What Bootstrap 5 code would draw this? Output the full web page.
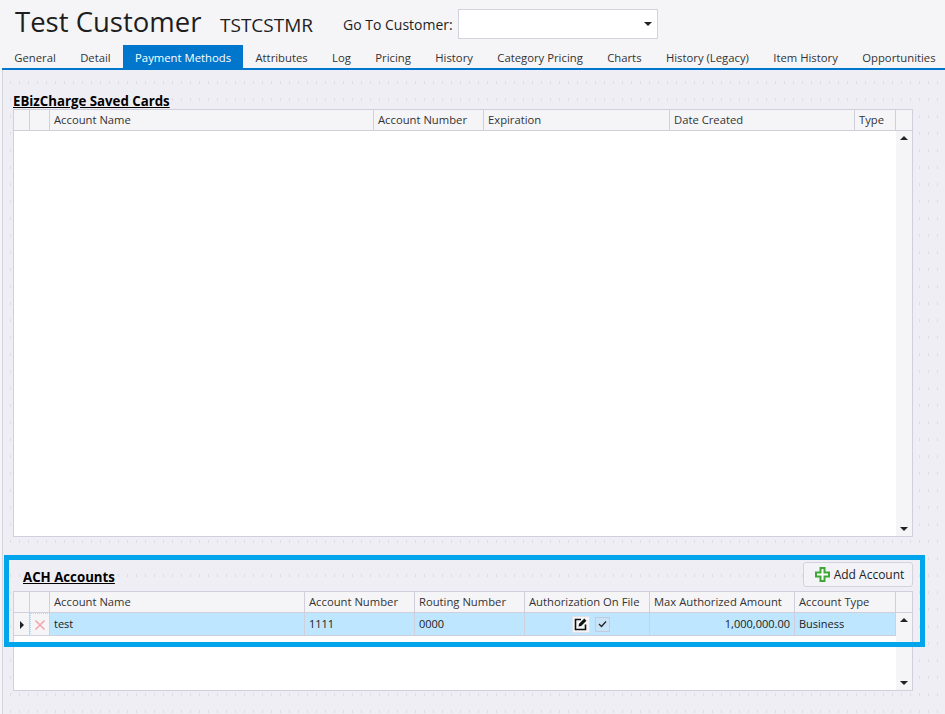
<!doctype html>
<html lang="en"><head><meta charset="utf-8"><title>Test Customer</title>
<link href="https://cdn.jsdelivr.net/npm/bootstrap@5.3.0/dist/css/bootstrap.min.css" rel="stylesheet">
<style>
html,body{height:100%;}
body{background:#f5f5f8;font-family:"Open Sans","Noto Sans","Liberation Sans",sans-serif;color:#1e1e1e;font-size:12px;overflow:hidden;height:714px;}
.app-head{height:45px;padding:9px 0 0 15px;}
.cust-name{font-size:27.5px;line-height:30px;margin:-2px 0 0;font-weight:400;width:205px;}
.cust-code{font-size:19px;line-height:30px;width:123px;margin-top:1px;}
.goto-label{font-size:14px;line-height:30px;width:115px;margin-top:1px;}
.combo{width:200px;height:30px;background:#fff;border:1px solid #d3d3de;}
.combo-arrow{width:0;height:0;border-left:4px solid transparent;border-right:4px solid transparent;border-top:4px solid #222;margin-right:5px;}
.tabbar{height:25px;margin-left:2px;border-bottom:2px solid #0077cc;}
.tabitem{height:23px;line-height:26px;padding:0 12.2px;font-size:11.3px;color:#333;white-space:nowrap;}
.tabitem.on{background:#0077cc;color:#fff;}
.work{position:relative;height:644px;margin-left:2px;border-left:1px solid #d3d3de;background-color:#eeeef4;background-image:radial-gradient(#dcdce3 .5px,transparent .8px);background-size:9px 17px;background-position:3px 4px;padding:23px 0 0 10px;}
.sect-title{font-weight:700;font-size:13.25px;line-height:16px;color:#000;text-decoration:underline;margin:0;background:#eeeef4;width:fit-content;}
.grid-box{width:900px;background:#fff;border:1px solid #d0d0dc;}
.grid-a{height:428px;}
.grid-b{height:100px;}
.grid-main{flex:1 1 auto;min-width:0;}
.dg{table-layout:fixed;border-collapse:separate;border-spacing:0;width:882px;margin:0;}
.dg th,.dg td{font-weight:400;padding:0 4px;border-right:1px solid #d0d0dc;border-bottom:1px solid #d0d0dc;white-space:nowrap;overflow:hidden;color:#333;line-height:14px;}
.dg th{font-size:11.25px;background:#f5f5f8;height:21px;}
.dg td{font-size:11px;height:23px;background:#bfe6ff;color:#1a1a1a;}
.dg td.rowhead{background:#f5f5f8;padding:0;text-align:center;}
.dg td.rowdel{background:#f5f5f8;padding:0;text-align:center;outline:1px dotted #b9dcf5;outline-offset:-1px;}
.scroll-rail{width:16px;flex:0 0 16px;background:#f5f5f8;}
.scroll-top{height:21px;border-bottom:1px solid #d0d0dc;}
.sarrow-up{width:0;height:0;border-left:4px solid transparent;border-right:4px solid transparent;border-bottom:4px solid #222;margin:5px auto 0;}
.sarrow-down{width:0;height:0;border-left:4px solid transparent;border-right:4px solid transparent;border-top:4px solid #222;margin:0 auto 5px;}
.ach-head{height:54px;width:900px;padding-left:10px;}
.ach-title{margin-bottom:6px;}
.add-btn{--bs-btn-padding-x:0;--bs-btn-padding-y:0;--bs-btn-border-radius:3px;width:110px;height:25px;background:#f3f3f7;border:1px solid #d3d3de;font-size:12px;color:#222;margin-bottom:4px;padding-left:3px;}
.focus-box{position:absolute;left:1px;top:485px;width:921px;height:92px;border:5px solid #00a5ec;pointer-events:none;}
.amt{text-align:right;}
.mini-edit{width:18px;height:17px;background:#f5f5f8;border:1px solid #e2e2ea;}
.mini-check{width:15px;height:15px;border:1px solid #c3cbdc;background:#c9e3f6;}
.auth-cell{gap:5px;padding-left:7px;}
</style></head><body>
<header class="app-head d-flex align-items-start">
<h1 class="cust-name">Test Customer</h1>
<div class="cust-code">TSTCSTMR</div>
<div class="goto-label">Go To Customer:</div>
<div class="combo d-flex align-items-center justify-content-end"><span class="combo-arrow"></span></div>
</header>
<nav class="tabbar d-flex">
<span class="tabitem">General</span><span class="tabitem">Detail</span><span class="tabitem on">Payment Methods</span><span class="tabitem">Attributes</span><span class="tabitem">Log</span><span class="tabitem">Pricing</span><span class="tabitem">History</span><span class="tabitem">Category Pricing</span><span class="tabitem">Charts</span><span class="tabitem">History (Legacy)</span><span class="tabitem">Item History</span><span class="tabitem">Opportunities</span>
</nav>
<main class="work">
<h2 class="sect-title">EBizCharge Saved Cards</h2>
<div class="grid-box grid-a d-flex">
<div class="grid-main"><table class="dg"><colgroup><col style="width:16px"><col style="width:20px"><col style="width:324px"><col style="width:110px"><col style="width:186px"><col style="width:185px"><col style="width:41px"></colgroup>
<thead><tr><th></th><th></th><th>Account Name</th><th>Account Number</th><th>Expiration</th><th>Date Created</th><th>Type</th></tr></thead></table></div>
<div class="scroll-rail d-flex flex-column"><div class="scroll-top"></div><div class="sarrow-up"></div><div class="flex-grow-1"></div><div class="sarrow-down"></div></div>
</div>
<div class="ach-head d-flex align-items-end justify-content-between">
<h2 class="sect-title ach-title">ACH Accounts</h2>
<button type="button" class="btn add-btn d-inline-flex align-items-center justify-content-center gap-1">
<svg width="15" height="15" viewBox="0 0 15 15"><path d="M5.500 1h4v4.500H14v4H9.500V14h-4V9.500H1v-4h4.500z" fill="#fff" stroke="#3fa535" stroke-width="2"/></svg>Add Account</button>
</div>
<div class="grid-box grid-b d-flex">
<div class="grid-main"><table class="dg"><colgroup><col style="width:16px"><col style="width:20px"><col style="width:255px"><col style="width:110px"><col style="width:110px"><col style="width:125px"><col style="width:145px"><col style="width:101px"></colgroup>
<thead><tr><th></th><th></th><th>Account Name</th><th>Account Number</th><th>Routing Number</th><th>Authorization On File</th><th>Max Authorized Amount</th><th>Account Type</th></tr></thead>
<tbody><tr><td class="rowhead"><svg width="6" height="10" viewBox="0 0 6 10"><path d="M1 1l4 4-4 4z" fill="#222"/></svg></td>
<td class="rowdel"><svg width="12" height="12" viewBox="0 0 12 12"><path d="M1.500 1.500l9 9M10.500 1.500l-9 9" stroke="#f4a9ad" stroke-width="1.700"/></svg></td>
<td>test</td><td>1111</td><td>0000</td>
<td><div class="d-flex justify-content-center align-items-center auth-cell"><span class="mini-edit d-inline-flex align-items-center justify-content-center"><svg width="14" height="14" viewBox="0 0 14 14"><path d="M11.500 7.500V12.500H1.500V2.500H7" fill="none" stroke="#111" stroke-width="1.600"/><path d="M4.500 9.500l.6-2.700L10.300 1.600l2.100 2.100L7.200 8.900z" fill="#111"/></svg></span><span class="mini-check d-inline-flex align-items-center justify-content-center"><svg width="9" height="8" viewBox="0 0 9 8"><path d="M1 4l2.500 2.500L8 1.500" fill="none" stroke="#222" stroke-width="1.300"/></svg></span></div></td>
<td class="amt">1,000,000.00</td><td>Business</td></tr></tbody></table></div>
<div class="scroll-rail d-flex flex-column"><div class="scroll-top"></div><div class="sarrow-up"></div><div class="flex-grow-1"></div><div class="sarrow-down"></div></div>
</div>
<div class="focus-box"></div>
</main>
<script src="https://cdn.jsdelivr.net/npm/bootstrap@5.3.0/dist/js/bootstrap.bundle.min.js"></script>
</body></html>
